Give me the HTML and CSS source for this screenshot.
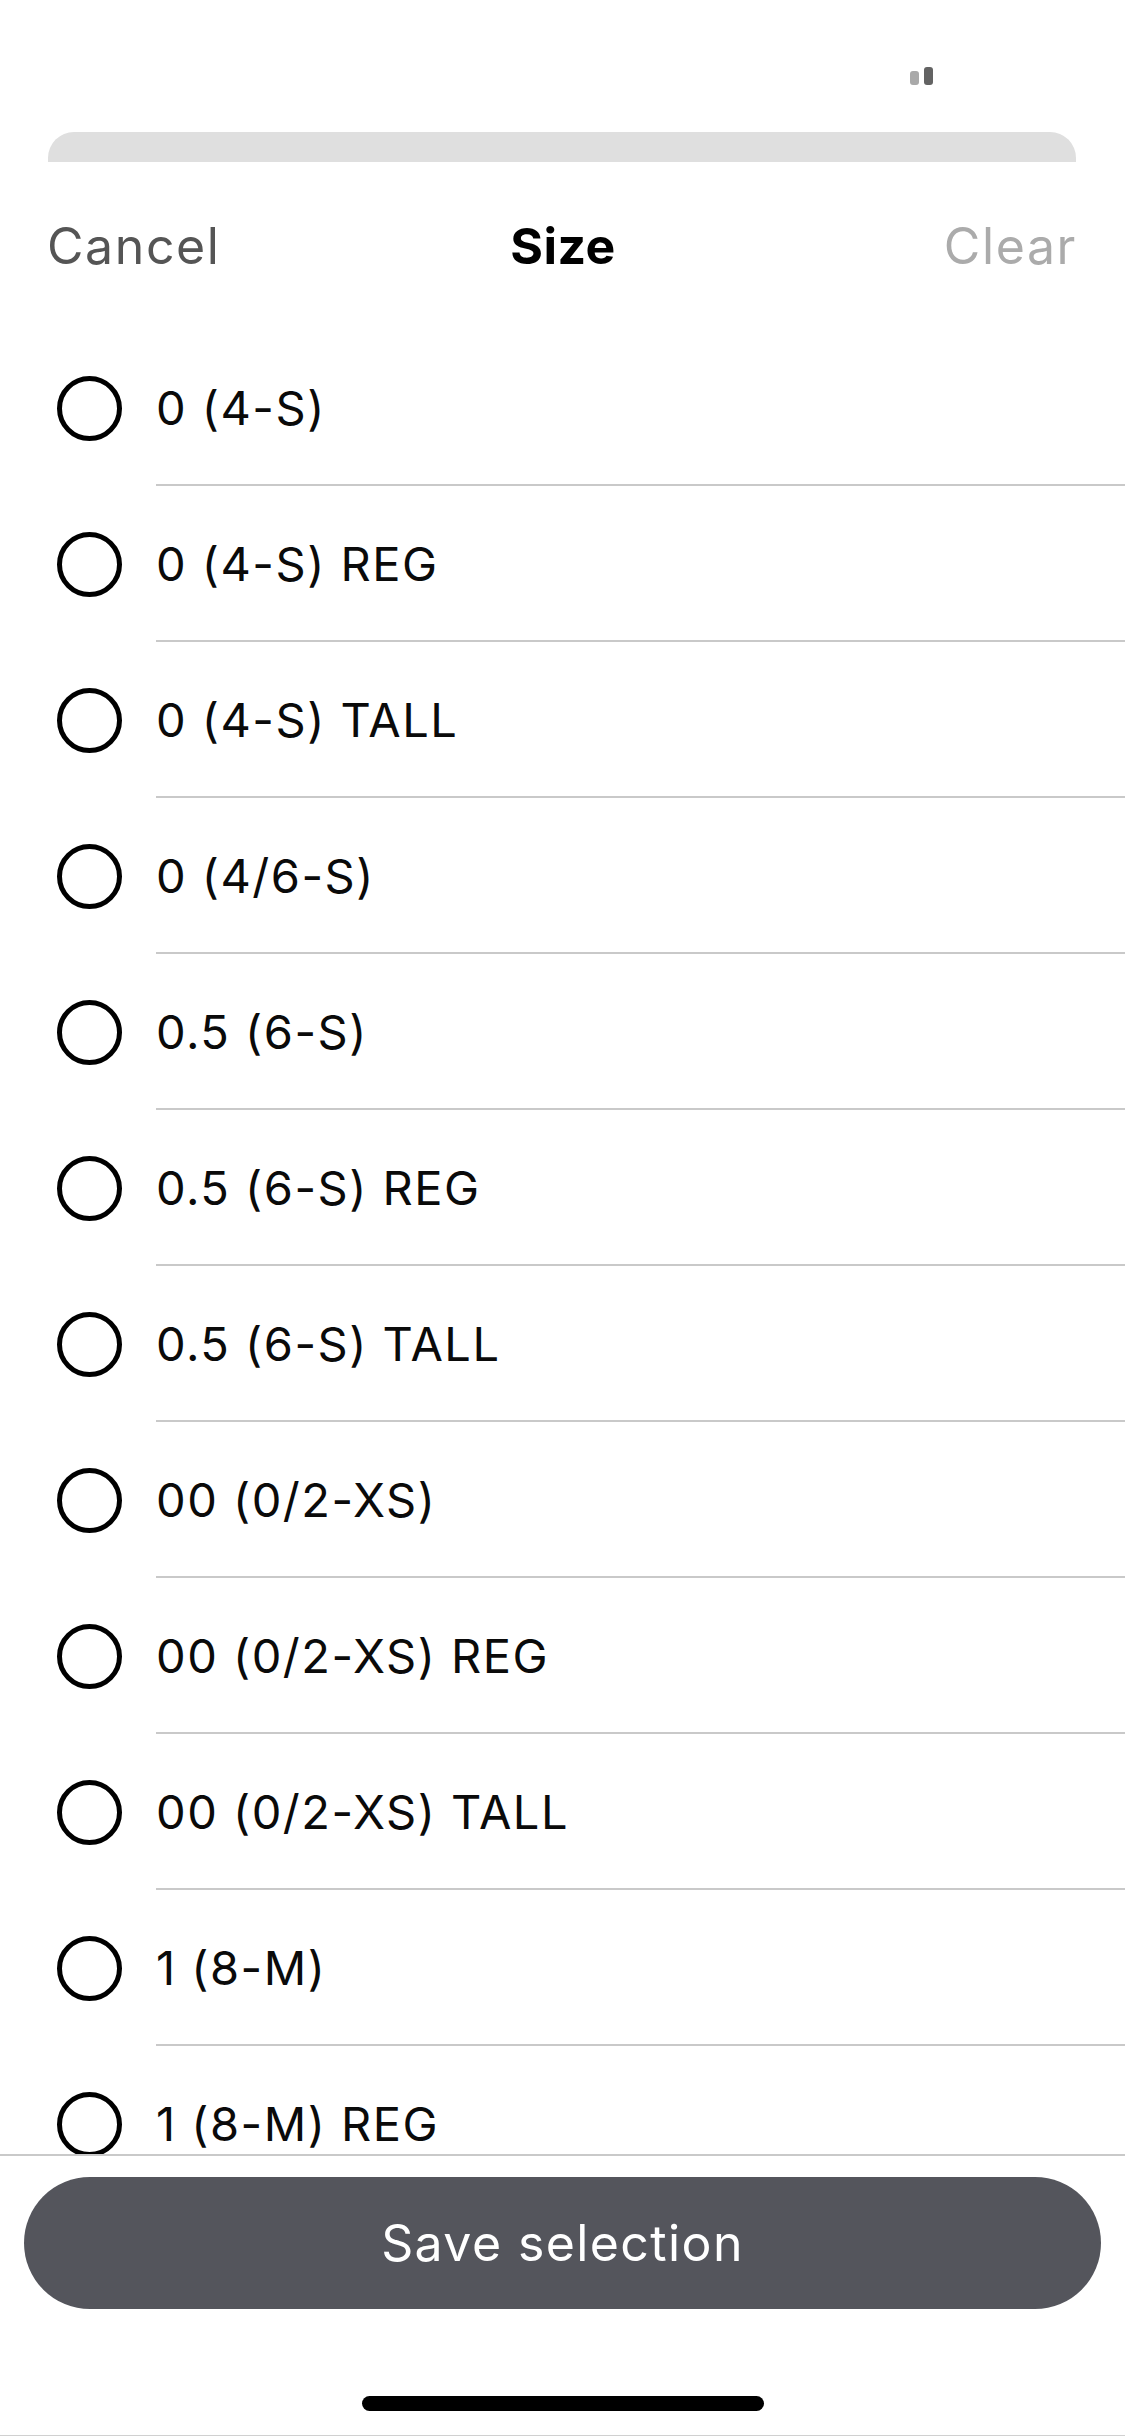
FILE: index.html
```html
<!DOCTYPE html>
<html lang="en">
<head>
<meta charset="utf-8">
<title>Size</title>
<link rel="stylesheet" href="styles.css">
</head>
<body>
<div class="screen">
  <div class="status">
    <div class="signal">
      <span class="bar bar-low"></span>
      <span class="bar bar-high"></span>
    </div>
  </div>
  <div class="sheet-behind"></div>
  <div class="header">
    <span class="cancel">Cancel</span>
    <span class="title">Size</span>
    <span class="clear">Clear</span>
  </div>
  <div class="list">
    <div class="row"><span class="radio"></span><span class="label">0 (4-S)</span></div>
    <div class="row"><span class="radio"></span><span class="label">0 (4-S) REG</span></div>
    <div class="row"><span class="radio"></span><span class="label">0 (4-S) TALL</span></div>
    <div class="row"><span class="radio"></span><span class="label">0 (4/6-S)</span></div>
    <div class="row"><span class="radio"></span><span class="label">0.5 (6-S)</span></div>
    <div class="row"><span class="radio"></span><span class="label">0.5 (6-S) REG</span></div>
    <div class="row"><span class="radio"></span><span class="label">0.5 (6-S) TALL</span></div>
    <div class="row"><span class="radio"></span><span class="label">00 (0/2-XS)</span></div>
    <div class="row"><span class="radio"></span><span class="label">00 (0/2-XS) REG</span></div>
    <div class="row"><span class="radio"></span><span class="label">00 (0/2-XS) TALL</span></div>
    <div class="row"><span class="radio"></span><span class="label">1 (8-M)</span></div>
    <div class="row"><span class="radio"></span><span class="label">1 (8-M) REG</span></div>
  </div>
  <div class="footer">
    <button class="save">Save selection</button>
    <div class="home"></div>
  </div>
</div>
</body>
</html>
```
FILE: styles.css
```css
html, body {
  margin: 0;
  padding: 0;
  background: #ffffff;
}

.screen {
  width: 1125px;
  height: 2436px;
  display: flex;
  flex-direction: column;
  overflow: hidden;
  font-family: "Inter", "Liberation Sans", sans-serif;
  color: #000;
  box-sizing: border-box;
  border-bottom: 1px solid #d0d0d0;
}

.status {
  height: 132px;
  flex: none;
  display: flex;
  justify-content: flex-end;
  align-items: flex-start;
  padding-right: 192px;
  box-sizing: border-box;
}

.signal {
  display: flex;
  align-items: flex-end;
  gap: 5px;
  margin-top: 67px;
  height: 18px;
}

.bar {
  width: 9px;
  border-radius: 3px;
  display: block;
}

.bar-low {
  height: 14px;
  background: #a9a9a9;
}

.bar-high {
  height: 18px;
  background: #636363;
}

.sheet-behind {
  flex: none;
  height: 30px;
  margin: 0 49px 0 48px;
  background: #dfdfdf;
  border-radius: 26px 26px 0 0;
}

.header {
  flex: none;
  height: 168px;
  display: flex;
  align-items: center;
  justify-content: space-between;
  padding: 0 48px 0 47px;
  font-size: 50px;
  letter-spacing: 1.6px;
}

.cancel {
  color: #555555;
  width: 240px;
}

.title {
  font-weight: 700;
  color: #000;
  letter-spacing: 0.5px;
  margin-left: 2px;
}

.clear {
  color: #ababab;
  width: 240px;
  text-align: right;
}

.list {
  flex: 1;
  overflow: hidden;
}

.row {
  height: 156px;
  display: flex;
  align-items: stretch;
  padding-left: 57px;
}

.radio {
  flex: none;
  width: 65px;
  height: 65px;
  box-sizing: border-box;
  border: 5px solid #000;
  border-radius: 50%;
  align-self: center;
  margin-right: 34px;
}

.label {
  flex: 1;
  display: flex;
  align-items: center;
  font-size: 47px;
  letter-spacing: 1.5px;
  color: #0a0a0a;
  border-bottom: 2px solid #c9c9c9;
  box-sizing: border-box;
}

.footer {
  flex: none;
  height: 281px;
  border-top: 2px solid #c9c9c9;
  box-sizing: border-box;
  display: flex;
  flex-direction: column;
  align-items: center;
  padding-top: 21px;
}

.save {
  width: 1077px;
  height: 132px;
  border: none;
  border-radius: 66px;
  background: #54555c;
  color: #ffffff;
  font-family: "Inter", "Liberation Sans", sans-serif;
  font-size: 50px;
  letter-spacing: 1.4px;
  padding: 0;
}

.home {
  width: 402px;
  height: 15px;
  border-radius: 8px;
  background: #000;
  margin-top: 87px;
}
```
